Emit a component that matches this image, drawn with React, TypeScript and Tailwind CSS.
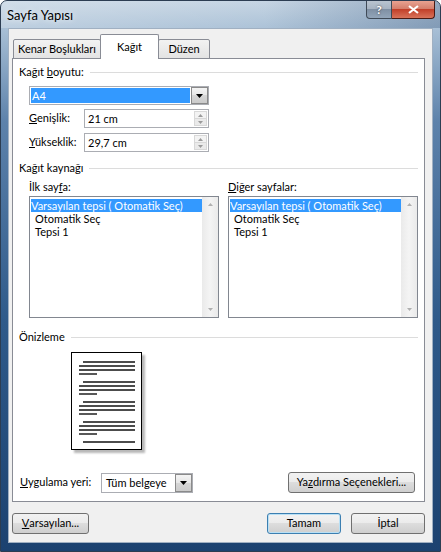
import React from 'react';

function DropButton() {
  return (
    <div className="flex h-full w-[17px] items-center justify-center border border-[#8a8a8a] bg-[linear-gradient(#f4f4f4_0%,#e6e6e6_50%,#d6d6d6_50%,#cbcbcb_100%)]">
      <svg width="7" height="4" viewBox="0 0 7 4">
        <path d="M0 0h7L3.5 4z" fill="#000" />
      </svg>
    </div>
  );
}

function Arrow({ up, color = '#7a7a7a' }: { up?: boolean; color?: string }) {
  return (
    <svg width="5" height="3" viewBox="0 0 5 3">
      <path d={up ? 'M0 3h5L2.5 0z' : 'M0 0h5L2.5 3z'} fill={color} />
    </svg>
  );
}

function Spinner({ value }: { value: string }) {
  return (
    <div className="flex h-[19px] w-[125px] border border-[#abadb3] bg-white">
      <div className="flex-1 pl-[3px] leading-[17px]">{value}</div>
      <div className="flex w-[15px] flex-col p-[1px]">
        <div className="flex flex-1 items-center justify-center border border-[#d8d8d8] bg-[#f3f3f3]">
          <Arrow up color="#9a9a9a" />
        </div>
        <div className="flex flex-1 items-center justify-center border border-t-0 border-[#d8d8d8] bg-[#eaeaea]">
          <Arrow color="#9a9a9a" />
        </div>
      </div>
    </div>
  );
}

function GroupHeader({ children }: { children: React.ReactNode }) {
  return (
    <div className="flex h-[16px] items-center">
      <span>{children}</span>
      <div className="ml-[6px] flex-1 border-t border-[#dcdcdc]" />
    </div>
  );
}

function ListBox() {
  return (
    <div className="flex h-[122px] w-[190px] border border-[#828790] bg-white">
      <div className="flex-1 pl-[1px] pt-[2px] leading-[13px]">
        <div className="h-[13px] bg-[#3399ff] text-white">Varsayılan tepsi ( Otomatik Seç)</div>
        <div className="h-[13px] pl-[4px]">Otomatik Seç</div>
        <div className="h-[13px] pl-[4px]">Tepsi 1</div>
      </div>
      <div className="flex w-[16px] flex-col items-center justify-between bg-[linear-gradient(to_right,#eaeaea,#f4f4f4,#eaeaea)] py-[6px]">
        <Arrow up color="#b0b0b0" />
        <Arrow color="#b0b0b0" />
      </div>
    </div>
  );
}

function PagePreview() {
  const groups = [9, 29, 49, 69];
  return (
    <div className="h-[98px] w-[71px] border border-black bg-white shadow-[3px_3px_2px_#b8b8b8]">
      <svg width="69" height="96" viewBox="0 0 69 96">
        {groups.map((y) => (
          <g key={y} stroke="#111" strokeWidth="1.4">
            <line x1="11" y1={y} x2="63" y2={y} />
            <line x1="7" y1={y + 4} x2="63" y2={y + 4} />
            <line x1="7" y1={y + 8} x2="63" y2={y + 8} />
            <line x1="7" y1={y + 12} x2="25" y2={y + 12} />
          </g>
        ))}
        <line x1="11" y1="89" x2="63" y2="89" stroke="#111" strokeWidth="1.4" />
      </svg>
    </div>
  );
}

function Btn({ children, className }: { children: React.ReactNode; className: string }) {
  return (
    <div
      className={`flex h-[21px] items-center justify-center rounded-[3px] border bg-[linear-gradient(#f2f2f2_0%,#ebebeb_50%,#dddddd_50%,#cfcfcf_100%)] ${className}`}
    >
      {children}
    </div>
  );
}

export default function App() {
  return (
    <div className="h-[552px] w-[441px] overflow-hidden whitespace-nowrap rounded-t-[7px] border border-[#2c3d52] bg-[linear-gradient(180deg,#c3d3e2_0px,#a9c0d6_26px,#5d82ab_120px,#2f5a8a_320px,#1c4270_100%)] font-['Lato',sans-serif] text-[11px] text-black">
      <div className="flex h-[27px] items-start justify-between bg-[linear-gradient(90deg,rgba(255,255,255,0.25),rgba(255,255,255,0.05)_60%,rgba(40,70,110,0.3))]">
        <div className="pl-[6px] pt-[5px] text-[13px] [text-shadow:0_0_6px_#fff]">Sayfa Yapısı</div>
        <div className="mr-[5px] flex">
          <div className="flex h-[18px] w-[26px] items-center justify-center rounded-bl-[4px] border border-t-0 border-[#3f4a57] bg-[linear-gradient(#b9c4d0_0%,#a5b2c1_50%,#7f90a4_50%,#93a5b9_100%)] text-[12px] font-bold text-white [text-shadow:0_0_2px_#333]">
            ?
          </div>
          <div className="flex h-[18px] w-[43px] items-center justify-center rounded-br-[4px] border border-l-0 border-t-0 border-[#4a1a14] bg-[linear-gradient(#e8a291_0%,#d27b68_50%,#c2402a_50%,#d9735a_100%)]">
            <svg width="11" height="9" viewBox="0 0 11 9">
              <path d="M1 1L10 8M10 1L1 8" stroke="#fff" strokeWidth="2.2" />
            </svg>
          </div>
        </div>
      </div>

      <div className="ml-[7px] h-[515px] w-[425px] border border-[#a0b0c2] bg-[#f0f0f0]">
        <div className="ml-[4px] mt-[4px] flex h-[25px] items-end">
          <div className="-mb-px flex h-[20px] w-[88px] items-center justify-center rounded-t-[2px] border border-[#898c95] bg-[linear-gradient(#f2f2f2,#e3e3e3)]">
            Kenar Boşlukları
          </div>
          <div className="relative z-10 -mb-px -ml-px flex h-[25px] w-[59px] items-start justify-center rounded-t-[2px] border border-b-0 border-[#898c95] bg-white pt-[4px]">
            Kağıt
          </div>
          <div className="-mb-px -ml-px flex h-[20px] w-[52px] items-center justify-center rounded-t-[2px] border border-[#898c95] bg-[linear-gradient(#f2f2f2,#e3e3e3)]">
            Düzen
          </div>
        </div>

        <div className="ml-[3px] flex h-[444px] w-[413px] flex-col border border-[#898c95] bg-white px-[6px] pt-[5px]">
          <GroupHeader>
            Kağıt <span className="underline">b</span>oyutu:
          </GroupHeader>
          <div className="ml-[10px] mt-[6px] flex h-[19px] w-[180px] border border-[#abadb3] bg-white">
            <div className="m-[1px] flex-1 bg-[#3399ff] pl-[1px] leading-[15px] text-white">A4</div>
            <DropButton />
          </div>
          <div className="ml-[10px] mt-[4px] flex items-center">
            <div className="w-[55px]">
              <span className="underline">G</span>enişlik:
            </div>
            <Spinner value="21 cm" />
          </div>
          <div className="ml-[10px] mt-[5px] flex items-center">
            <div className="w-[55px]">
              <span className="underline">Y</span>ükseklik:
            </div>
            <Spinner value="29,7 cm" />
          </div>

          <div className="mt-[8px]">
            <GroupHeader>Kağıt kaynağı</GroupHeader>
          </div>
          <div className="ml-[10px] mt-[3px] flex gap-[9px]">
            <div className="flex flex-col">
              <div className="h-[17px]">
                İlk say<span className="underline">f</span>a:
              </div>
              <ListBox />
            </div>
            <div className="flex flex-col">
              <div className="h-[17px]">
                <span className="underline">D</span>iğer sayfalar:
              </div>
              <ListBox />
            </div>
          </div>

          <div className="mt-[11px]">
            <GroupHeader>Önizleme</GroupHeader>
          </div>
          <div className="ml-[52px] mt-[7px]">
            <PagePreview />
          </div>

          <div className="mt-[22px] flex items-center">
            <div className="w-[82px] pl-[1px]">
              <span className="underline">U</span>ygulama yeri:
            </div>
            <div className="flex h-[20px] w-[92px] border border-[#abadb3] bg-white">
              <div className="flex-1 pl-[4px] leading-[18px]">Tüm belgeye</div>
              <DropButton />
            </div>
            <Btn className="ml-auto mr-[3px] w-[127px] border-[#707070]">
              Ya<span className="underline">z</span>dırma Seçenekleri...
            </Btn>
          </div>
        </div>

        <div className="mt-[11px] flex items-center pl-[3px] pr-[7px]">
          <Btn className="w-[77px] border-[#707070]">
            <span className="underline">V</span>arsayılan...
          </Btn>
          <Btn className="ml-auto w-[74px] border-[#3c7fb1] shadow-[inset_0_0_0_1px_#b9e0f5]">Tamam</Btn>
          <Btn className="ml-[10px] w-[74px] border-[#707070]">İptal</Btn>
        </div>
      </div>
    </div>
  );
}
